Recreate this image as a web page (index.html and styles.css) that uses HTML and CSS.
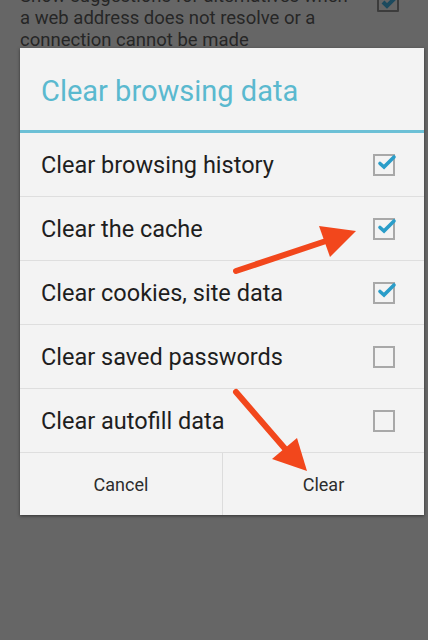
FILE: index.html
```html
<!DOCTYPE html>
<html lang="en">
<head>
    <meta charset="UTF-8">
    <meta name="viewport" content="width=device-width, initial-scale=1.0">
    <title>Clear browsing data</title>
    <link rel="stylesheet" href="styles.css">
</head>
<body>

    <div class="behind">
        <div class="behind-text">
            <p>Show suggestions for alternatives when</p>
            <p>a web address does not resolve or a</p>
            <p>connection cannot be made</p>
        </div>
        <span class="behind-check">
            <svg viewBox="0 0 20 20" width="20" height="20"><path d="M4 10 L8 14 L17 5" fill="none" stroke="#1c4a5e" stroke-width="4"/></svg>
        </span>
    </div>

    <div class="dialog">
        <div class="dialog-title">Clear browsing data</div>

        <div class="option">
            <span>Clear browsing history</span>
            <span class="checkbox checked"><svg viewBox="0 0 24 24" width="24" height="24"><path d="M6 12.5 L10 16 L20 6" fill="none" stroke="#2a9dc9" stroke-width="3.6" stroke-linecap="round"/></svg></span>
        </div>
        <div class="option">
            <span>Clear the cache</span>
            <span class="checkbox checked"><svg viewBox="0 0 24 24" width="24" height="24"><path d="M6 12.5 L10 16 L20 6" fill="none" stroke="#2a9dc9" stroke-width="3.6" stroke-linecap="round"/></svg></span>
        </div>
        <div class="option">
            <span>Clear cookies, site data</span>
            <span class="checkbox checked"><svg viewBox="0 0 24 24" width="24" height="24"><path d="M6 12.5 L10 16 L20 6" fill="none" stroke="#2a9dc9" stroke-width="3.6" stroke-linecap="round"/></svg></span>
        </div>
        <div class="option">
            <span>Clear saved passwords</span>
            <span class="checkbox"></span>
        </div>
        <div class="option">
            <span>Clear autofill data</span>
            <span class="checkbox"></span>
        </div>

        <div class="buttons">
            <button>Cancel</button>
            <button>Clear</button>
        </div>
    </div>

    <!-- red arrows drawn on top of the screenshot -->
    <svg class="arrows" viewBox="0 0 428 640" width="428" height="640">
        <line x1="236" y1="271" x2="326" y2="241" stroke="#f2471c" stroke-width="6" stroke-linecap="round"/>
        <polygon points="356,231 319,226 330,257" fill="#f2471c"/>
        <line x1="236" y1="392" x2="287" y2="451" stroke="#f2471c" stroke-width="6" stroke-linecap="round"/>
        <polygon points="307,471 272,459 297,438" fill="#f2471c"/>
    </svg>

</body>
</html>
```

FILE: styles.css
```css
body {
    margin: 0;
    width: 428px;
    height: 640px;
    overflow: hidden;
    background-color: #666666;
    font-family: Roboto, "Noto Sans", sans-serif;
    position: relative;
}
.behind {
    height: 48px;
    overflow: hidden;
    position: relative;
    padding-left: 20px;
}
.behind-text {
    margin-top: -15px;
    color: #262626;
    font-size: 18.5px;
}
.behind-text p {
    margin: 0;
    line-height: 22px;
}
.behind-check {
    position: absolute;
    left: 377px;
    top: -10px;
    width: 18px;
    height: 18px;
    border: 2px solid #3c3c3c;
    border-radius: 1px;
}
.dialog {
    margin: 0 4px 0 20px;
    background-color: #f3f3f3;
    box-shadow: 0 1px 3px rgba(0, 0, 0, 0.5);
}
.dialog-title {
    height: 82px;
    line-height: 86px;
    padding-left: 21px;
    font-size: 29px;
    color: #5ab9cf;
    border-bottom: 3px solid #6cc0d6;
}
.option {
    height: 63px;
    display: flex;
    align-items: center;
    justify-content: space-between;
    padding: 0 29px 0 21px;
    border-bottom: 1px solid #dedede;
    font-size: 23.5px;
    color: #1e1e1e;
}
.checkbox {
    width: 18px;
    height: 18px;
    border: 2px solid #a8a8a8;
    position: relative;
}
.checkbox svg {
    position: absolute;
    left: -1px;
    top: -5px;
}
.buttons {
    display: grid;
    grid-template-columns: 1fr 1fr;
    height: 62px;
}
.buttons button {
    background: none;
    border: none;
    font-family: Roboto, "Noto Sans", sans-serif;
    font-size: 18px;
    color: #2c2c2c;
    padding: 0;
}
.buttons button + button {
    border-left: 1px solid #dcdcdc;
}
.arrows {
    position: absolute;
    left: 0;
    top: 0;
    pointer-events: none;
}
```
